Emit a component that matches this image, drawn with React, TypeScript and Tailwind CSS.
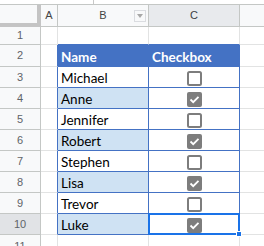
import type { ReactNode } from 'react'

const people = [
  { name: 'Michael', checked: false },
  { name: 'Anne', checked: true },
  { name: 'Jennifer', checked: false },
  { name: 'Robert', checked: true },
  { name: 'Stephen', checked: false },
  { name: 'Lisa', checked: true },
  { name: 'Trevor', checked: false },
  { name: 'Luke', checked: true },
]

const rowHeights = ['h-[18px]', 'h-[22px]', 'h-[21px]', 'h-[21px]', 'h-[21px]', 'h-[21px]', 'h-[21px]', 'h-[21px]', 'h-[21px]', 'h-[21px]', 'h-[21px]']

const dataText = 'font-[Lato,"Liberation_Sans",sans-serif] text-[13.5px] leading-[14px] flex items-end pl-[3px] pb-[2px]'

function Checkbox({ checked }: { checked: boolean }) {
  return (
    <svg width="15" height="15" viewBox="0 0 15 15">
      {checked ? (
        <>
          <rect x="0" y="0" width="15" height="15" rx="2" fill="#7d7d7d" />
          <polyline points="3.5,7.5 6.2,10.2 11.5,4.8" fill="none" stroke="#fff" strokeWidth="1.8" />
        </>
      ) : (
        <rect x="1" y="1" width="13" height="13" rx="1.5" fill="#fff" stroke="#7d7d7d" strokeWidth="2" />
      )}
    </svg>
  )
}

function RowHead({ n, h, active }: { n: number; h: string; active?: boolean }) {
  return (
    <div
      className={`${h} flex items-center justify-center border-r border-b border-[#c4c7c5] text-[11px] text-[#5f6368] ${
        active ? 'bg-[#e1e3e6]' : 'bg-[#f8f9fa]'
      }`}
    >
      {n}
    </div>
  )
}

function Cell({ className, children }: { className: string; children?: ReactNode }) {
  return <div className={`border-r border-b ${className}`}>{children}</div>
}

export default function App() {
  return (
    <div className="w-[264px] h-[246px] overflow-hidden bg-white" style={{ fontFamily: '"Liberation Sans", Arial, sans-serif' }}>
      {/* top strip */}
      <div className="h-[4px] relative">
        <div className="absolute left-[93px] top-0 w-[1px] h-[4px] bg-[#c8c8c8]" />
      </div>

      <div className="grid grid-cols-[41px_17px_91px_91px_1fr] border-t border-[#c4c7c5]">
        {/* column headers */}
        <div className="h-[22px] bg-[#f8f9fa] border-r-[4px] border-b-[4px] border-[#c4c4c4]" />
        <div className="h-[22px] bg-[#f8f9fa] border-r border-b border-[#c4c7c5] flex items-center justify-center text-[11px] text-[#444]">A</div>
        <div className="h-[22px] bg-[#f8f9fa] border-r border-b border-[#c4c7c5] relative flex items-center justify-center text-[11px] text-[#444]">
          B
          <div className="absolute right-[2px] top-[5px] w-[12px] h-[12px] border border-[#dadce0] flex items-center justify-center">
            <div className="w-0 h-0 border-l-[3px] border-r-[3px] border-t-[4px] border-l-transparent border-r-transparent border-t-[#a8a8a8]" />
          </div>
        </div>
        <div className="h-[22px] bg-[#e8eaed] border-r border-b border-[#c4c7c5] flex items-center justify-center text-[11px] text-[#3c4043]">C</div>
        <div className="h-[22px] bg-[#f8f9fa] border-b border-[#c4c7c5]" />

        {/* row 1 */}
        <RowHead n={1} h={rowHeights[0]} />
        <Cell className={`${rowHeights[0]} border-[#e2e3e3]`} />
        <Cell className={`${rowHeights[0]} border-r-[#e2e3e3] border-b-[#4472c4]`} />
        <Cell className={`${rowHeights[0]} border-r-[#e2e3e3] border-b-[#4472c4]`} />
        <div className={`${rowHeights[0]} border-b border-[#e2e3e3]`} />

        {/* row 2: table header */}
        <RowHead n={2} h={rowHeights[1]} />
        <Cell className={`${rowHeights[1]} border-r-[#4472c4] border-b-[#e2e3e3]`} />
        <Cell className={`${rowHeights[1]} bg-[#4472c4] border-[#4472c4] ${dataText} font-bold text-white`}>Name</Cell>
        <Cell className={`${rowHeights[1]} bg-[#4472c4] border-[#4472c4] ${dataText} font-bold text-white`}>Checkbox</Cell>
        <div className={`${rowHeights[1]} border-b border-[#e2e3e3]`} />

        {people.map((p, i) => {
          const h = rowHeights[i + 2]
          const last = i === people.length - 1
          return (
            <div key={p.name} className="contents">
              <RowHead n={i + 3} h={h} active={last} />
              <Cell className={`${h} border-r-[#4472c4] border-b-[#e2e3e3]`} />
              <Cell className={`${h} border-[#4472c4] ${dataText} text-black ${i % 2 === 1 ? 'bg-[#cfe2f3]' : 'bg-white'}`}>
                {p.name}
              </Cell>
              <Cell className={`${h} border-[#4472c4] relative flex items-center justify-center pt-[2px]`}>
                <Checkbox checked={p.checked} />
                {last && (
                  <>
                    <div className="absolute left-[-1px] top-[-1px] right-[-1px] bottom-[-1px] border-2 border-[#1a73e8]" />
                    <div className="absolute right-[-3px] bottom-[-3px] w-[6px] h-[6px] bg-[#1a73e8] border border-white" />
                  </>
                )}
              </Cell>
              <div className={`${h} border-b border-[#e2e3e3]`} />
            </div>
          )
        })}

        {/* row 11 */}
        <div className="h-[21px] flex justify-center pt-[3px] border-r border-[#c4c7c5] bg-[#f8f9fa] text-[11px] text-[#5f6368]">11</div>
        <Cell className="h-[21px] border-[#e2e3e3]" />
        <Cell className="h-[21px] border-[#e2e3e3]" />
        <Cell className="h-[21px] border-[#e2e3e3]" />
        <div className="h-[21px]" />
      </div>
    </div>
  )
}
